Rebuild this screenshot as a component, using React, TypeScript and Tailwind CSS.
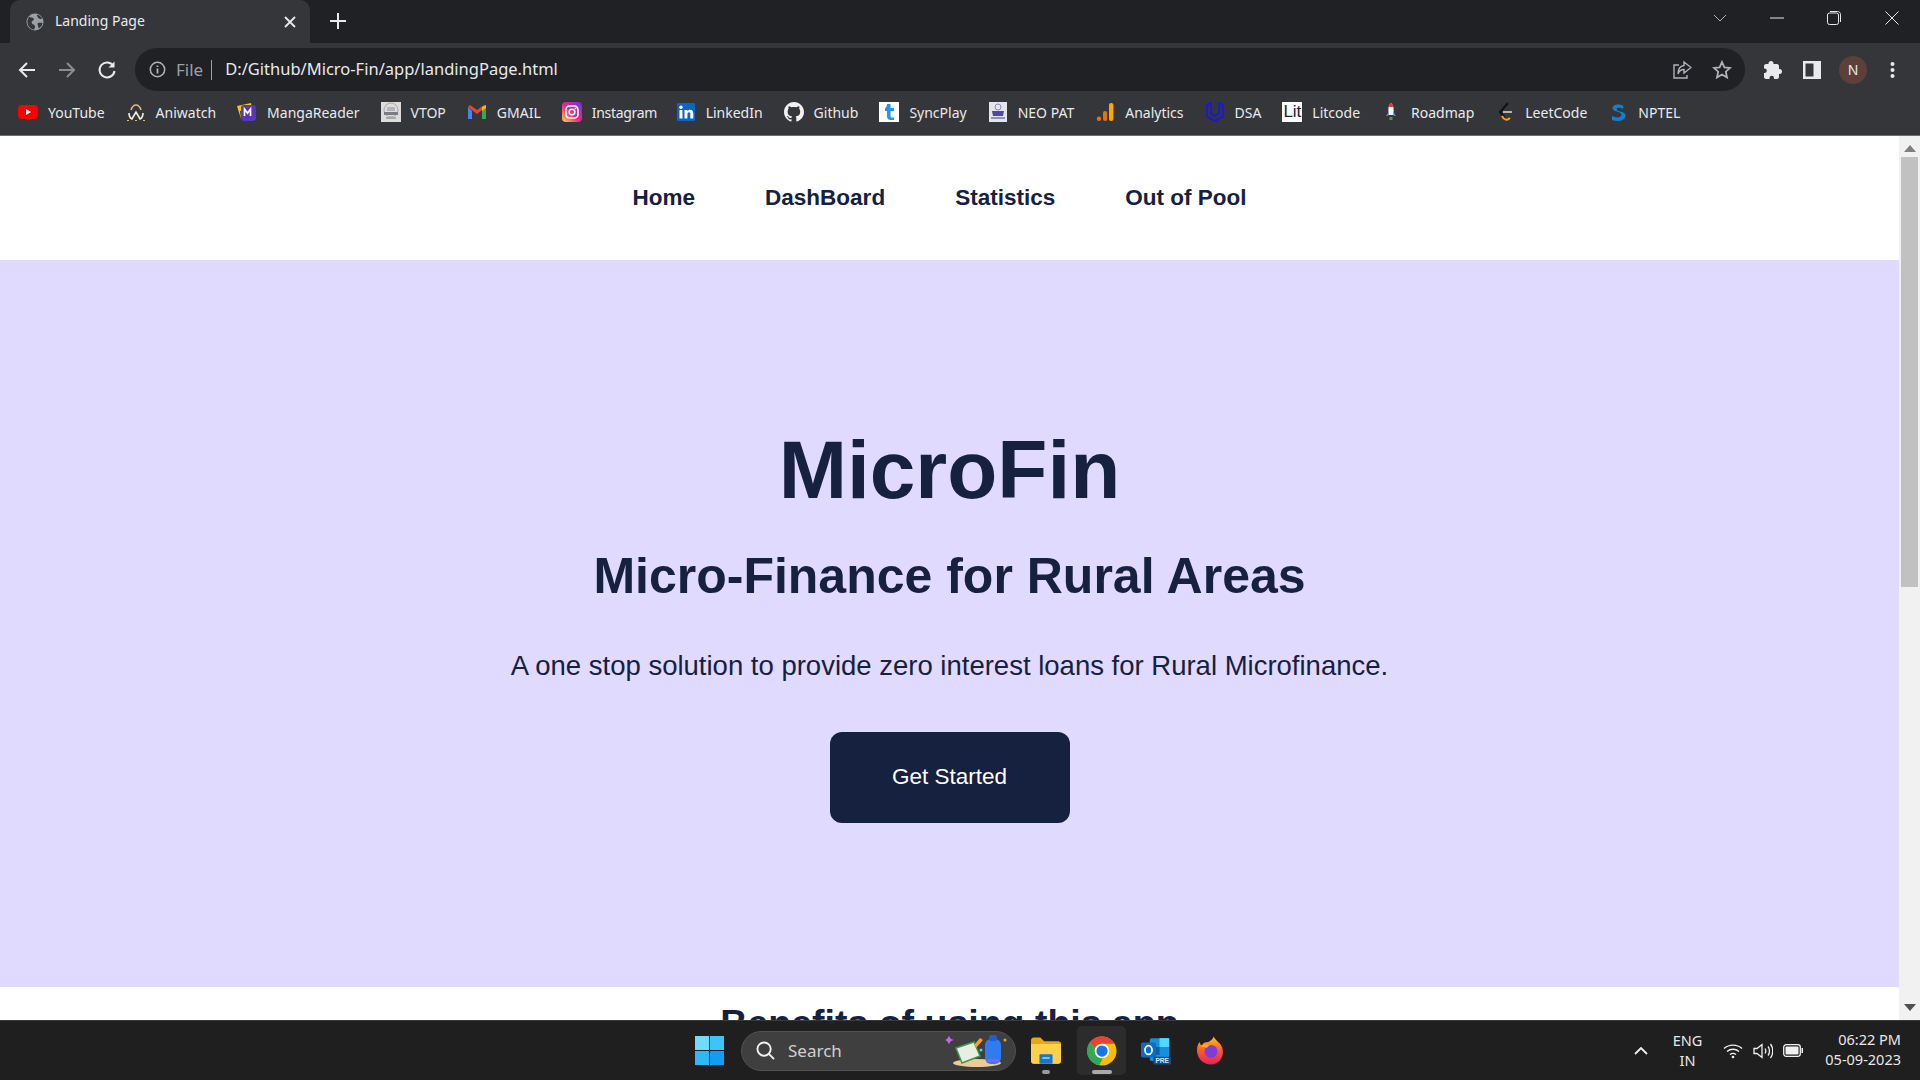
import { ReactNode } from 'react';

const sans = "font-['Liberation_Sans',Arial,sans-serif]";
const ui = "font-['Noto_Sans','Open_Sans',sans-serif]";

function Fav({ children }: { children: ReactNode }) {
  return <svg width="20" height="20" viewBox="0 0 20 20" className="shrink-0">{children}</svg>;
}

// bookmark favicons, drawn small and rough like the originals
const bookmarks: { label: string; icon: ReactNode; tweak?: string }[] = [
  {
    label: 'YouTube',
    icon: (
      <Fav>
        <rect x="0" y="3" width="20" height="14" rx="4" fill="#f00" />
        <path d="M8 7l5 3-5 3z" fill="#fff" />
      </Fav>
    ),
  },
  {
    label: 'Aniwatch',
    icon: (
      <Fav>
        <path d="M5 8c1-3 3-5 5-5s4 2 5 5" stroke="#e6bd6a" strokeWidth="1.6" fill="none" />
        <path d="M3 11c0 3 1 5 3 6l4-7 4 7c2-1 3-3 3-6" stroke="#f4f0e6" strokeWidth="1.6" fill="none" />
        <path d="M1 18.500h2M17 18.500h2M9 18.500h2" stroke="#e6bd6a" strokeWidth="1" />
      </Fav>
    ),
  },
  {
    label: 'MangaReader',
    icon: (
      <Fav>
        <path d="M0 4l14-3 1 5-12 3 1 8z" fill="#f5c518" />
        <rect x="4" y="3" width="15" height="16" rx="3" fill="#5a35b5" />
        <path d="M7.500 14V7l3 4 3-4v7" stroke="#fff" strokeWidth="1.700" fill="none" />
      </Fav>
    ),
  },
  {
    label: 'VTOP',
    icon: (
      <Fav>
        <rect width="20" height="20" fill="#dcdcdc" />
        <circle cx="10" cy="8" r="7" fill="none" stroke="#a8a8ae" strokeWidth="1" />
        <path d="M3 10h14v3H3z" fill="#7c7c84" />
        <path d="M6 5h8v4H6z" fill="#b4b4ba" />
        <path d="M5 15h10v2H5z" fill="#a8a8ae" />
      </Fav>
    ),
  },
  {
    label: 'GMAIL',
    icon: (
      <Fav>
        <path d="M1 5v12h4V9z" fill="#4285f4" />
        <path d="M19 5v12h-4V9z" fill="#34a853" />
        <path d="M1 5l9 7 9-7-2-2-7 5-7-5z" fill="#ea4335" />
        <path d="M15 5l4-2v3l-4 3z" fill="#fbbc04" />
      </Fav>
    ),
  },
  {
    label: 'Instagram',
    tweak: 'tracking-[-0.3px]',
    icon: (
      <Fav>
        <defs>
          <linearGradient id="ig" x1="0" y1="1" x2="1" y2="0">
            <stop offset="0" stopColor="#feda45" />
            <stop offset="0.45" stopColor="#f0297f" />
            <stop offset="1" stopColor="#6a2cf5" />
          </linearGradient>
        </defs>
        <rect width="20" height="20" rx="4" fill="url(#ig)" />
        <rect x="4" y="4" width="12" height="12" rx="3.5" stroke="#fff" strokeWidth="1.6" fill="none" />
        <circle cx="10" cy="10" r="2.8" stroke="#fff" strokeWidth="1.6" fill="none" />
        <circle cx="13.6" cy="6.4" r="0.9" fill="#fff" />
      </Fav>
    ),
  },
  {
    label: 'LinkedIn',
    tweak: 'ml-[-2.5px]',
    icon: (
      <Fav>
        <rect x="1" y="1" width="18" height="18" rx="1" fill="#0a66c2" />
        <rect x="3.500" y="8" width="3" height="8.500" fill="#fff" />
        <circle cx="5" cy="5.300" r="1.700" fill="#fff" />
        <path d="M8.500 8h2.800v1.300c.6-1 1.600-1.500 2.800-1.500 2.200 0 3.200 1.400 3.200 3.800v4.900h-3v-4.400c0-1.200-.4-1.900-1.400-1.900s-1.500.8-1.500 1.900v4.400H8.500z" fill="#fff" />
      </Fav>
    ),
  },
  {
    label: 'Github',
    icon: (
      <Fav>
        <path
          d="M10 0C4.500 0 0 4.500 0 10c0 4.400 2.900 8.200 6.800 9.500.5.100.7-.2.700-.5v-1.700c-2.800.6-3.400-1.300-3.400-1.300-.5-1.200-1.100-1.500-1.100-1.500-.9-.6.1-.6.1-.6 1 .1 1.500 1 1.500 1 .9 1.500 2.300 1.100 2.900.8.100-.6.4-1.100.6-1.300-2.200-.3-4.500-1.100-4.500-4.900 0-1.100.4-2 1-2.700-.1-.3-.4-1.300.1-2.600 0 0 .8-.3 2.700 1 .8-.2 1.700-.3 2.500-.3s1.700.1 2.500.3c1.900-1.300 2.700-1 2.700-1 .5 1.400.2 2.400.1 2.600.6.7 1 1.600 1 2.700 0 3.800-2.300 4.700-4.600 4.900.4.3.7.9.7 1.900V19c0 .3.2.6.7.5C17.100 18.200 20 14.400 20 10c0-5.500-4.500-10-10-10z"
          fill="#f2f2f2"
        />
      </Fav>
    ),
  },
  {
    label: 'SyncPlay',
    icon: (
      <Fav>
        <rect width="20" height="20" fill="#fff" />
        <path d="M8 2h3.500v4H15v3h-3.500v5c0 1 .6 1.500 1.600 1.500H15V18h-3c-2.500 0-4-1.300-4-3.800V9H6V6.500C7 6 8 4 8 2z" fill="#2196f3" />
      </Fav>
    ),
  },
  {
    label: 'NEO PAT',
    icon: (
      <Fav>
        <rect x="1" width="18" height="20" fill="#e4e4ee" />
        <circle cx="10" cy="5" r="3" fill="none" stroke="#8a8abc" strokeWidth="1" />
        <path d="M4 9h12l-1 5H5z" fill="#4a4aa0" />
        <path d="M3 15h14v2H3z" fill="#9090c4" />
      </Fav>
    ),
  },
  {
    label: 'Analytics',
    icon: (
      <Fav>
        <circle cx="4" cy="16.800" r="2.200" fill="#e37400" />
        <rect x="8" y="9" width="4.200" height="10" rx="2" fill="#e8710a" />
        <rect x="14" y="1" width="4.400" height="18" rx="2" fill="#f9ab00" />
      </Fav>
    ),
  },
  {
    label: 'DSA',
    icon: (
      <Fav>
        <path d="M10 19l-8-4.500V3l4-2v10.500l4 2.500 4-2.500V1l4 2v11.500z" fill="none" stroke="#1414f0" strokeWidth="1.600" />
      </Fav>
    ),
  },
  {
    label: 'Litcode',
    icon: (
      <span className={`w-5 h-5 bg-white text-[#1a2238] text-[17px] leading-5 text-center shrink-0 ${sans}`}>Lit</span>
    ),
  },
  {
    label: 'Roadmap',
    icon: (
      <Fav>
        <path d="M10 1c2 2 2.600 4 2.600 6v6H7.400V7C7.400 5 8 3 10 1z" fill="#f5f5f5" />
        <path d="M10 1c1.200 1.200 2 2.400 2.300 4H7.700C8 3.400 8.800 2.200 10 1z" fill="#e53935" />
        <path d="M7.400 10L5 14h2.400zM12.600 10L15 14h-2.400z" fill="#2196f3" />
        <rect x="8.500" y="15" width="3" height="3" fill="#43a047" />
      </Fav>
    ),
  },
  {
    label: 'LeetCode',
    icon: (
      <Fav>
        <path d="M13 1L5 10l4.500 5.500" stroke="#111" strokeWidth="2" fill="none" />
        <path d="M8 10h9" stroke="#b3b3b3" strokeWidth="2" />
        <path d="M7 14c2 4 5 5 8 2" stroke="#f89f1b" strokeWidth="2" fill="none" />
      </Fav>
    ),
  },
  {
    label: 'NPTEL',
    icon: (
      <Fav>
        <path d="M15.500 4C13 1.800 5 1.500 4.500 6c-.4 4 9 3 9 7 0 3-6 3-9.500 1v4c5 2 13 1.500 13.500-4.500.3-4.500-9-3.500-8.800-6.500.1-1.800 4-1.500 6.300 0z" fill="#1080d0" />
      </Fav>
    ),
  },
];

export default function App() {
  return (
    <div className={`w-[1920px] h-[1080px] overflow-hidden flex flex-col bg-white ${ui}`}>
      {/* tab strip */}
      <div className="h-[43px] bg-[#202124] flex shrink-0">
        <div className="w-[300px] ml-[10px] h-[43px] bg-[#35363a] rounded-t-[10px] flex items-center pl-[16px] pr-[14px] text-[#e8eaed]">
          <svg width="18" height="18" viewBox="0 0 18 18">
            <circle cx="9" cy="9" r="8.500" fill="#9aa0a6" />
            <path d="M3 4c2 0 3 1 4 1s1 2 0 2.500S5 9 6 10.500s3 1 3 3-1 3-1 3C4 16 1.500 13 1.500 9 1.500 7 2 5.500 3 4zM11 1.500c2 .5 4 2 5 4-1 1-2 .5-3 0s-2-2-2-4zM12 10c1-.5 3-.5 4.500 0-.3 2-1.500 4-3 5-1 0-1.500-1-1.500-2s-1-2.500 0-3z" fill="#35363a" />
          </svg>
          <span className="ml-[11px] text-[14px] flex-1 pb-[2px]">Landing Page</span>
          <svg width="12" height="12" viewBox="0 0 12 12" stroke="#e8eaed" strokeWidth="1.800">
            <path d="M1 1l10 10M11 1L1 11" />
          </svg>
        </div>
        <svg width="16" height="16" viewBox="0 0 16 16" stroke="#e8eaed" strokeWidth="2" className="ml-[20px] mt-[13px]">
          <path d="M8 0v16M0 8h16" />
        </svg>
        <div className="flex-1" />
        <div className="flex items-center h-[36px] text-[#e8eaed]">
          <svg width="14" height="8" viewBox="0 0 14 8" fill="none" stroke="#b0b3b8" className="mr-[43px]">
            <path d="M1 1l6 6 6-6" />
          </svg>
          <svg width="14" height="2" viewBox="0 0 14 2" stroke="#e8eaed" className="mr-[43px]">
            <path d="M0 1h14" />
          </svg>
          <svg width="14" height="14" viewBox="0 0 14 14" fill="none" stroke="#e8eaed" className="mr-[44px]">
            <rect x="0.500" y="2" width="11" height="11.500" rx="2" />
            <path d="M3 0.500h7.500c1.800 0 3 1.200 3 3V11" />
          </svg>
          <svg width="14" height="14" viewBox="0 0 14 14" fill="none" stroke="#e8eaed" className="mr-[21px]">
            <path d="M0.500 0.500l13 13M13.500 0.500l-13 13" />
          </svg>
        </div>
      </div>

      {/* toolbar */}
      <div className="h-[48px] bg-[#35363a] flex items-end shrink-0">
        <div className="w-[135px] h-[43px] flex items-center shrink-0">
          <svg width="20" height="20" viewBox="0 0 20 20" fill="none" stroke="#e8eaed" strokeWidth="2" className="ml-[17px]">
            <path d="M18 10H3M10 3l-7 7 7 7" />
          </svg>
          <svg width="20" height="20" viewBox="0 0 20 20" fill="none" stroke="#8b8d90" strokeWidth="2" className="ml-[20px]">
            <path d="M2 10h15M10 3l7 7-7 7" />
          </svg>
          <svg width="20" height="20" viewBox="0 0 20 20" fill="none" stroke="#e8eaed" strokeWidth="2" className="ml-[20px]">
            <path d="M16.500 6A7.500 7.500 0 1 0 17.500 11" />
            <path d="M17.500 1.500v6h-6" fill="#e8eaed" stroke="none" />
          </svg>
        </div>
        <div className="w-[1610px] h-[43px] bg-[#202124] rounded-full flex items-center shrink-0">
          <svg width="17" height="17" viewBox="0 0 17 17" fill="none" stroke="#b0b3b8" strokeWidth="1.500" className="ml-[14px]">
            <circle cx="8.500" cy="8.500" r="7.200" />
            <path d="M8.500 7.500v5M8.500 4.500v1.500" strokeWidth="1.800" />
          </svg>
          <span className="ml-[10px] text-[17px] text-[#9aa0a6]">File</span>
          <span className="ml-[8px] w-px h-[20px] bg-[#9aa0a6]" />
          <span className="ml-[13px] text-[16.5px] text-[#e8eaed]">D:/Github/Micro-Fin/app/landingPage.html</span>
          <div className="flex-1" />
          <svg width="20" height="20" viewBox="0 0 20 20" fill="none" stroke="#b0b3b8" strokeWidth="1.400" className="mr-[20px]">
            <path d="M7 5H2v13h13v-3" />
            <path d="M12 2l7 5.500-7 5.500V9.500C9 9.500 7 11 6 14c0-5 2-8 6-8.500z" />
          </svg>
          <svg width="20" height="20" viewBox="0 0 20 20" fill="none" stroke="#b0b3b8" strokeWidth="1.800" className="mr-[13px]">
            <path d="M10 2l2.400 5.300 5.600.6-4.200 3.800 1.200 5.800-5-3-5 3 1.200-5.800L2 7.900l5.600-.6z" />
          </svg>
        </div>
        <div className="flex-1 h-[43px] flex items-center text-[#e8eaed]">
          <svg width="18" height="18" viewBox="0 0 18 18" fill="#e8eaed" className="ml-[19px]">
            <path d="M7 0c1.500 0 2.500 1 2.500 2.500V3H13c1 0 2 1 2 2v3h.5a2.500 2.500 0 0 1 0 5H15v3c0 1-1 2-2 2H10v-1a2.200 2.200 0 0 0-4.500 0v1H2c-1 0-2-1-2-2v-4h1a2.300 2.300 0 0 0 0-4.500H0V5c0-1 1-2 2-2h2.500v-.5C4.500 1 5.500 0 7 0z" />
          </svg>
          <svg width="18" height="18" viewBox="0 0 18 18" className="ml-[21px]">
            <path d="M0 0h18v18H0z" fill="#e8eaed" />
            <path d="M2.500 2.500h8v13h-8z" fill="#35363a" />
          </svg>
          <span className="ml-[18px] w-7 h-7 rounded-full bg-[#5d4037] text-[14px] flex items-center justify-center">N</span>
          <svg width="5" height="16" viewBox="0 0 5 16" fill="#e8eaed" className="ml-[23px]">
            <circle cx="2.500" cy="2" r="2" />
            <circle cx="2.500" cy="8" r="2" />
            <circle cx="2.500" cy="14" r="2" />
          </svg>
        </div>
      </div>

      {/* bookmarks */}
      <div className="h-[45px] bg-[#35363a] border-b border-[#6b6c70] flex items-center pl-[18px] gap-[21px] text-[14px] text-[#e8eaed] shrink-0 pb-[2px]">
        {bookmarks.map((b) => (
          <div key={b.label} className={`flex items-center gap-[10px] ${b.tweak ?? ''}`}>
            {b.icon}
            <span>{b.label}</span>
          </div>
        ))}
      </div>

      {/* page + scrollbar */}
      <div className="flex-1 min-h-0 flex">
        <div className={`flex-1 min-w-0 overflow-hidden bg-white ${sans}`}>
          <nav className="h-[124px] flex items-center justify-center pr-[20px] gap-[70px] text-[22.5px] font-bold text-[#16203f]">
            <a>Home</a>
            <a>DashBoard</a>
            <a>Statistics</a>
            <a>Out of Pool</a>
          </nav>
          <section className="h-[727px] bg-[#e0dafe] flex flex-col items-center text-[#16203f]">
            <h1 className="mt-[162px] text-[82px] leading-[96px] font-bold">MicroFin</h1>
            <h2 className="mt-[30px] text-[50px] leading-[56px] font-bold">Micro-Finance for Rural Areas</h2>
            <p className="mt-[46px] text-[27.5px] leading-[32px]">
              A one stop solution to provide zero interest loans for Rural Microfinance.
            </p>
            <button className="mt-[50px] w-[240px] h-[91px] rounded-[12px] bg-[#16203f] text-white text-[22.5px] pb-[2px]">
              Get Started
            </button>
          </section>
          <h2 className="mt-[13px] text-center text-[37.5px] leading-[46px] font-bold text-[#16203f]">Benefits of using this app</h2>
        </div>
        <div className="w-[21px] shrink-0 bg-[#f1f1f1] flex flex-col items-center">
          <svg width="12" height="7" viewBox="0 0 12 7" fill="#7f7f7f" className="mt-[9px]">
            <path d="M6 0l6 7H0z" />
          </svg>
          <div className="mt-[5px] w-[17px] h-[430px] bg-[#c1c1c1]" />
          <div className="flex-1" />
          <svg width="12" height="7" viewBox="0 0 12 7" fill="#505050" className="mb-[9px]">
            <path d="M6 7l6-7H0z" />
          </svg>
        </div>
      </div>

      {/* taskbar */}
      <div className="h-[60px] bg-[#1f1f1f] border-t border-[#3a3a3a] flex items-center shrink-0 text-white">
        <div className="ml-[695px] w-[29px] h-[29px] grid grid-cols-2 gap-[1px] shrink-0">
          <span className="bg-[#6fdcff]" />
          <span className="bg-[#3cc4fb]" />
          <span className="bg-[#2fb6fb]" />
          <span className="bg-[#149cf5]" />
        </div>
        <div className="ml-[17px] w-[275px] h-[40px] rounded-full bg-[#3f3f3f] border border-[#505050] flex items-center relative shrink-0">
          <svg width="19" height="19" viewBox="0 0 20 20" fill="none" stroke="#f0f0f0" strokeWidth="2" className="ml-[14px]">
            <circle cx="8.500" cy="8.500" r="7" />
            <path d="M13.500 13.500l5.500 5.500" />
          </svg>
          <span className="ml-[13px] text-[17px] text-[#d0d0d0]">Search</span>
          <svg width="62" height="36" viewBox="0 0 62 36" className="absolute right-[8px] top-[1px]">
            <ellipse cx="32" cy="30" rx="24" ry="4" fill="#eccb94" />
            <path d="M11 15l18-6 6 14-18 7z" fill="#e8efe2" stroke="#3c9a52" strokeWidth="1.500" />
            <path d="M29 12l6-7 3 2-7 8z" fill="#f0a030" />
            <rect x="40" y="6" width="16" height="25" rx="6" fill="#2f7bf0" />
            <rect x="44" y="2" width="8" height="6" rx="2" fill="#1d5fd0" />
            <path d="M42 26h12v3H42z" fill="#8b5cf6" />
            <path d="M4 3l2 3 3 1-3 1-2 3-2-3-2-1 2-1z" fill="#c06adf" />
            <circle cx="60" cy="7" r="1.500" fill="#f0a030" />
            <circle cx="36" cy="17" r="1.500" fill="#5ccfe6" />
          </svg>
        </div>
        <div className="ml-[6px] w-[48px] h-[49px] flex items-center justify-center relative shrink-0">
          <svg width="30" height="27" viewBox="0 0 32 28">
            <path d="M0 3c0-1.500 1-3 3-3h7l4 4h15c2 0 3 1 3 3v18c0 2-1 3-3 3H3c-2 0-3-1-3-3z" fill="#e8a813" />
            <path d="M0 7h32v18c0 2-1 3-3 3H3c-2 0-3-1-3-3z" fill="#ffd04a" />
            <rect x="9" y="18" width="14" height="10" rx="1" fill="#1976c9" />
            <rect x="12" y="21" width="8" height="2" fill="#7ec8f5" />
          </svg>
          <span className="absolute bottom-[1px] w-[8px] h-[4px] rounded-full bg-[#9a9a9a]" />
        </div>
        <div className="ml-[7px] w-[49px] h-[49px] rounded-[5px] bg-[#2c2c2c] flex items-center justify-center relative shrink-0">
          <svg width="30" height="30" viewBox="0 0 32 32">
            <circle cx="16" cy="16" r="15.500" fill="#fbbc04" />
            <path d="M16 .5a15.500 15.500 0 0 1 13.400 7.750H16a7.800 7.800 0 0 0-7.400 5.300L3 6.500A15.500 15.500 0 0 1 16 .5z" fill="#ea4335" />
            <path d="M3 6.500A15.500 15.500 0 0 0 13 31.200l4-7.500a7.800 7.800 0 0 1-8.400-10.200z" fill="#34a853" />
            <circle cx="16" cy="16" r="7.800" fill="#fff" />
            <circle cx="16" cy="16" r="6" fill="#1a73e8" />
          </svg>
          <span className="absolute bottom-[1px] w-[20px] h-[4px] rounded-full bg-[#aaaaaa]" />
        </div>
        <div className="w-[60px] flex items-center justify-center shrink-0">
          <svg width="30" height="29" viewBox="0 0 34 32">
            <rect x="10" y="2" width="22" height="26" rx="2" fill="#1490df" />
            <rect x="21" y="2" width="11" height="10" fill="#50d9ff" />
            <rect x="10" y="12" width="11" height="9" fill="#0a5fa8" />
            <rect x="0" y="7" width="17" height="17" rx="2" fill="#0f6cbd" />
            <ellipse cx="8.500" cy="15.500" rx="4" ry="5" fill="none" stroke="#fff" strokeWidth="2" />
            <rect x="14" y="23" width="20" height="9" rx="1" fill="#0a4f8f" />
            <text x="24" y="30.500" textAnchor="middle" fontSize="7.500" fontWeight="700" fill="#dfe8f0" fontFamily="Liberation Sans">PRE</text>
          </svg>
        </div>
        <div className="w-[50px] flex items-center justify-center shrink-0">
          <svg width="28" height="29" viewBox="0 0 30 30">
            <defs>
              <linearGradient id="ff" x1="0.500" y1="0" x2="0.500" y2="1">
                <stop offset="0" stopColor="#ffc21a" />
                <stop offset="0.5" stopColor="#ff5a2a" />
                <stop offset="1" stopColor="#e3215f" />
              </linearGradient>
            </defs>
            <path d="M18 0c1 4 7 6 9 12 3 9-3 18-12 18S0 23 0 15c0-4 1-7 3-9 0 2 1 3 2 4 1-3 4-4 7-4C14 5 17 3 18 0z" fill="url(#ff)" />
            <circle cx="15" cy="16" r="7" fill="#7b3fd6" />
            <path d="M4 10c3-2 7-2 10 0-2 0-3 1-3 2-3 0-5 0-7-2z" fill="#ffb02a" />
          </svg>
        </div>
        <div className="flex-1" />
        <svg width="14" height="8" viewBox="0 0 14 8" fill="none" stroke="#f0f0f0" strokeWidth="1.800" className="mr-[25px]">
          <path d="M1 7l6-6 6 6" />
        </svg>
        <div className="text-[14.5px] leading-[20px] text-center mr-[21px] text-[#e8e8e8] pb-[2px]">
          ENG
          <br />
          IN
        </div>
        <svg width="20" height="16" viewBox="0 0 20 16" fill="none" stroke="#f0f0f0" strokeWidth="1.400" className="mr-[10px]">
          <path d="M1 5.500C6 1 14 1 19 5.500M4 8.500c3.500-3 8.500-3 12 0M7 11.500c2-1.500 4-1.500 6 0" />
          <circle cx="10" cy="14" r="1.300" fill="#f0f0f0" stroke="none" />
        </svg>
        <svg width="20" height="18" viewBox="0 0 20 18" fill="none" stroke="#f0f0f0" strokeWidth="1.300" className="mr-[10px]">
          <path d="M1 6.500h3L9 2.500v13l-5-4H1zM12 6.500c1 1.500 1 3.500 0 5M15 4.500c2 2.500 2 6.500 0 9M17.500 2c3 4 3 10 0 14" />
        </svg>
        <svg width="20" height="13" viewBox="0 0 20 13" className="mr-[22px]">
          <rect x="0.700" y="0.700" width="16.600" height="11.600" rx="2.500" fill="none" stroke="#f0f0f0" strokeWidth="1.300" />
          <rect x="2.500" y="2.500" width="13" height="8" rx="1" fill="#f0f0f0" />
          <path d="M18.500 4h1.500v5h-1.500z" fill="#f0f0f0" />
        </svg>
        <div className="text-[14.5px] leading-[20px] text-right mr-[19px] text-[#e8e8e8] pb-[3px]">
          06:22 PM
          <br />
          05-09-2023
        </div>
      </div>
    </div>
  );
}
